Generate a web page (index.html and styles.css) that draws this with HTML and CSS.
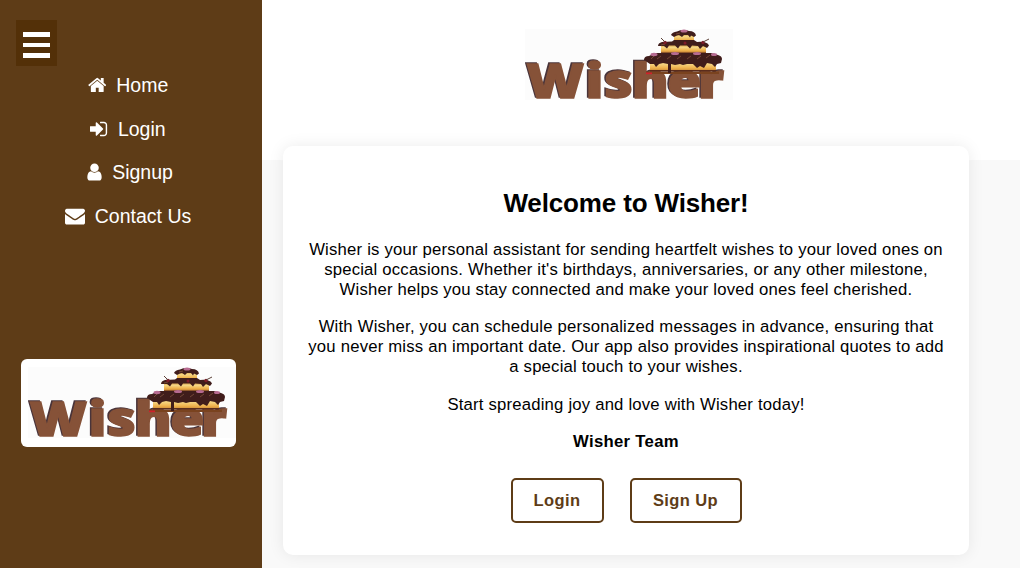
FILE: index.html
```html
<!DOCTYPE html>
<html lang="en">
<head>
<meta charset="utf-8">
<title>Wisher</title>
<link rel="stylesheet" href="styles.css">
</head>
<body>
<svg class="defs" width="0" height="0">
  <defs>
    <linearGradient id="sponge" x1="0" y1="0" x2="0" y2="1">
      <stop offset="0" stop-color="#c98d35"/><stop offset=".4" stop-color="#f5d684"/><stop offset=".75" stop-color="#efb24c"/><stop offset="1" stop-color="#c98738"/>
    </linearGradient>
    <symbol id="logo" viewBox="0 0 208 71">
      <rect width="208" height="71" fill="#fcfcfc"/>
      <g class="word word-shadow" transform="translate(0 68.300) scale(1.180 1)"><text x="0 50 65.800 89.300 119.300 145.300" y="0">Wisher</text></g>
      <g class="word" transform="translate(1.500 69.400) scale(1.180 1)"><text x="0 50 65.800 89.300 119.300 145.300" y="0">Wisher</text></g>
      <path d="M121 42.500h73v2.500h-73z" fill="#7a431f"/>
      <rect x="125" y="30" width="66" height="12" fill="url(#sponge)"/>
      <path d="M125 41h66v1.500h-66zM136 23h45v2h-45z" fill="#5a2c1c"/>
      <rect x="136" y="15" width="45" height="8.500" fill="url(#sponge)"/>
      <rect x="149" y="4" width="20" height="9" fill="url(#sponge)"/>
      <path d="M121 43.500h6v1.700h-6z" fill="#d2202c"/>
      <path d="M146 6q1-3 6-3.500q6-2.500 12-.5q6 0 7 4.500l-2 1.500-3-1.500-1 2-2-2.500-4 0-2 2-3-2-2 .5-3 1.500zM133 17q0-3 4-4l10-.5 2-1.500h20l3 2q10-1 12 3.500l-2 2.500-4-2-3 3-2-3-6-.5-2 3-3-3-7 0-2 3-3-3-6 0-2 3-3-2.500z" fill="#401d1b"/>
      <path d="M119 31q0-4 5-4l6-3h56l7 2q4 1 4 4l-1 4-4 1-2 3-3-3-5-1-3 5-4-2-3 2-4-4-6 0-4 1-3-1-5 1-4-1v9h-3v-9l-5-1-4 1-3 3-2-3-4 0z" fill="#401d1b"/>
      <path d="M126 30l3-3m3 3 4-3m6 3 4-3m6 3 4-3m6 3 4-3m6 3 4-3m5 2 4-3M136 16l4-1m11-10 4-1" stroke="#80523c" stroke-width=".8" fill="none"/>
      <g fill="#b76b91"><ellipse cx="159" cy="2" rx="3.500" ry="1.500"/><ellipse cx="129" cy="25.500" rx="3.500" ry="1.700"/><ellipse cx="150" cy="24.500" rx="4" ry="1.500"/><ellipse cx="172" cy="24.500" rx="4" ry="1.500"/><ellipse cx="189" cy="25.500" rx="3" ry="1.500"/></g>
      <g fill="#7e1b29"><circle cx="140" cy="13.500" r="1.700"/><circle cx="160" cy="14" r="1.500"/><circle cx="178" cy="13.500" r="1.700"/></g>
      <path d="M140 13l-4-4m42 4 6-3" stroke="#5b4037" fill="none"/>
    </symbol>
  </defs>
</svg>
<div class="page">
  <aside class="sidebar">
    <button class="toggle" aria-label="Menu"><span></span><span></span><span></span></button>
    <nav class="nav">
      <a><svg width="18.500" height="20" viewBox="0 0 1664 1792"><path d="M1408 992v480q0 26-19 45t-45 19H960v-384H704v384H320q-26 0-45-19t-19-45V992q0-1 .5-3t.5-3l575-474 575 474q1 2 1 6zm223-69-62 74q-8 9-21 11h-3q-13 0-21-7L832 424l-692 577q-12 8-24 7-13-2-21-11l-62-74q-8-10-7-23.500t11-21.500l719-599q32-26 76-26t76 26l244 204V288q0-14 9-23t23-9h192q14 0 23 9t9 23v408l219 182q10 8 11 21.500t-7 23.500z"/></svg>Home</a>
      <a><svg width="17.500" height="20" viewBox="0 0 1568 1792"><path d="M1184 896q0 26-19 45l-544 544q-19 19-45 19t-45-19-19-45v-288H64q-26 0-45-19t-19-45V704q0-26 19-45t45-19h448V352q0-26 19-45t45-19 45 19l544 544q19 19 19 45zm352-352v704q0 119-84.500 203.500T1248 1536H928q-13 0-22.500-9.500T896 1504q0-4-1-20t-.5-26.500 3-23.500 10-19.500 20.500-6.500h320q66 0 113-47t47-113V544q0-66-47-113t-113-47H936l-11.500-1-11.500-3-8-5.500-7-9-2-13.500q0-4-1-20t-.5-26.500 3-23.500 10-19.500T928 256h320q119 0 203.500 84.500T1536 544z"/></svg>Login</a>
      <a><svg width="15" height="20" viewBox="0 0 1280 1792"><path d="M1280 1399q0 109-62.500 187t-150.500 78H213q-88 0-150.500-78T0 1399q0-85 8.500-160.500t31.500-152 58.500-131 94-89T327 832q131 128 313 128t313-128q76 0 134.500 34.500t94 89 58.500 131 31.500 152 8.500 160.500zm-256-887q0 159-112.500 271.500T640 896 368.500 783.500 256 512t112.500-271.500T640 128t271.500 112.500T1024 512z"/></svg>Signup</a>
      <a><svg width="20" height="20" viewBox="0 0 1792 1792"><path d="M1792 710v794q0 66-47 113t-113 47H160q-66 0-113-47T0 1504V710q44 49 101 87 362 246 497 345 57 42 92.500 65.500t94.500 48 110 24.500h2q51 0 110-24.500t94.500-48T1194 1142q170-123 498-345 57-39 100-87zm0-294q0 79-49 151t-122 123q-376 261-468 325-10 7-42.500 30.500t-54 38-52 32.500-57.500 27-50 9h-2q-23 0-50-9t-57.500-27-52-32.500-54-38T639 1015q-91-64-262-182.500T172 690q-62-42-117-115.500T0 438q0-78 41.500-130T160 256h1472q65 0 112.500 47t47.500 113z"/></svg>Contact Us</a>
    </nav>
    <div class="side-logo"><svg width="208" height="71"><use href="#logo"/></svg></div>
  </aside>
  <main class="main">
    <header class="banner"><svg width="208" height="71"><use href="#logo"/></svg></header>
    <section class="card">
      <h1>Welcome to Wisher!</h1>
      <p>Wisher is your personal assistant for sending heartfelt wishes to your loved ones on<br>special occasions. Whether it's birthdays, anniversaries, or any other milestone,<br>Wisher helps you stay connected and make your loved ones feel cherished.</p>
      <p>With Wisher, you can schedule personalized messages in advance, ensuring that<br>you never miss an important date. Our app also provides inspirational quotes to add<br>a special touch to your wishes.</p>
      <p>Start spreading joy and love with Wisher today!</p>
      <p><strong>Wisher Team</strong></p>
      <div class="actions"><a class="btn login">Login</a><a class="btn signup">Sign Up</a></div>
    </section>
  </main>
</div>
</body>
</html>
```

FILE: styles.css
```css
* { box-sizing: border-box; }
body { margin: 0; font-family: "Liberation Sans", Arial, sans-serif; color: #000; }
.defs { display: block; }
.page { display: flex; width: 1020px; height: 568px; overflow: hidden; background: #f9f9f9; }
.sidebar { width: 262px; height: 568px; background: #5e3c17; padding: 20px 0 0 16px; flex: none; }
.toggle { display: flex; flex-direction: column; gap: 6px; width: 41px; height: 46px; padding: 12px 7px 0; border: 0; background: #533008; }
.toggle span { width: 27px; height: 4.600px; background: #fff; }
.nav { display: flex; flex-direction: column; width: 224px; margin-top: -2.500px; }
.nav a { display: flex; align-items: center; justify-content: center; height: 43.700px; color: #fff; font-size: 19.500px; white-space: nowrap; }
.nav svg { fill: #fff; margin-right: 10px; position: relative; top: -.5px; }
.nav a:nth-child(3) { padding-left: 4px; }
.side-logo { display: flex; width: 215px; height: 88px; margin: 120.500px 0 0 5px; padding: 8px 0 0 6.500px; background: #fff; border-radius: 6px; }
.word { font-family: "Open Sans", sans-serif; font-weight: 800; font-size: 47px; fill: #865238; stroke: #865238; stroke-width: 1.400px; }
.word-shadow { fill: #49343a; stroke: #49343a; }
.main { flex: 1; }
.banner { height: 160px; background: #fff; padding: 28.500px 0 0 262.500px; }
.card { width: 686px; height: 409px; margin: -14px 0 0 21px; padding: 43px 0 0; border-radius: 10px; background: #fff; box-shadow: 0 0 16px rgba(0,0,0,.08); text-align: center; position: relative; white-space: nowrap; }
h1 { margin: 0 0 22px; font-size: 26px; line-height: 29px; letter-spacing: -.15px; }
p { margin: 0 0 17.400px; font-size: 16.700px; line-height: 20px; letter-spacing: .2px; }
strong { letter-spacing: .3px; }
.actions { display: flex; gap: 26px; justify-content: center; margin-top: 26px; }
.btn { height: 45px; border: 2px solid #5e3c17; border-radius: 5px; color: #5e3c17; font-size: 16.500px; font-weight: 700; line-height: 41px; letter-spacing: .4px; }
.login { width: 93px; }
.signup { width: 112px; }
```
